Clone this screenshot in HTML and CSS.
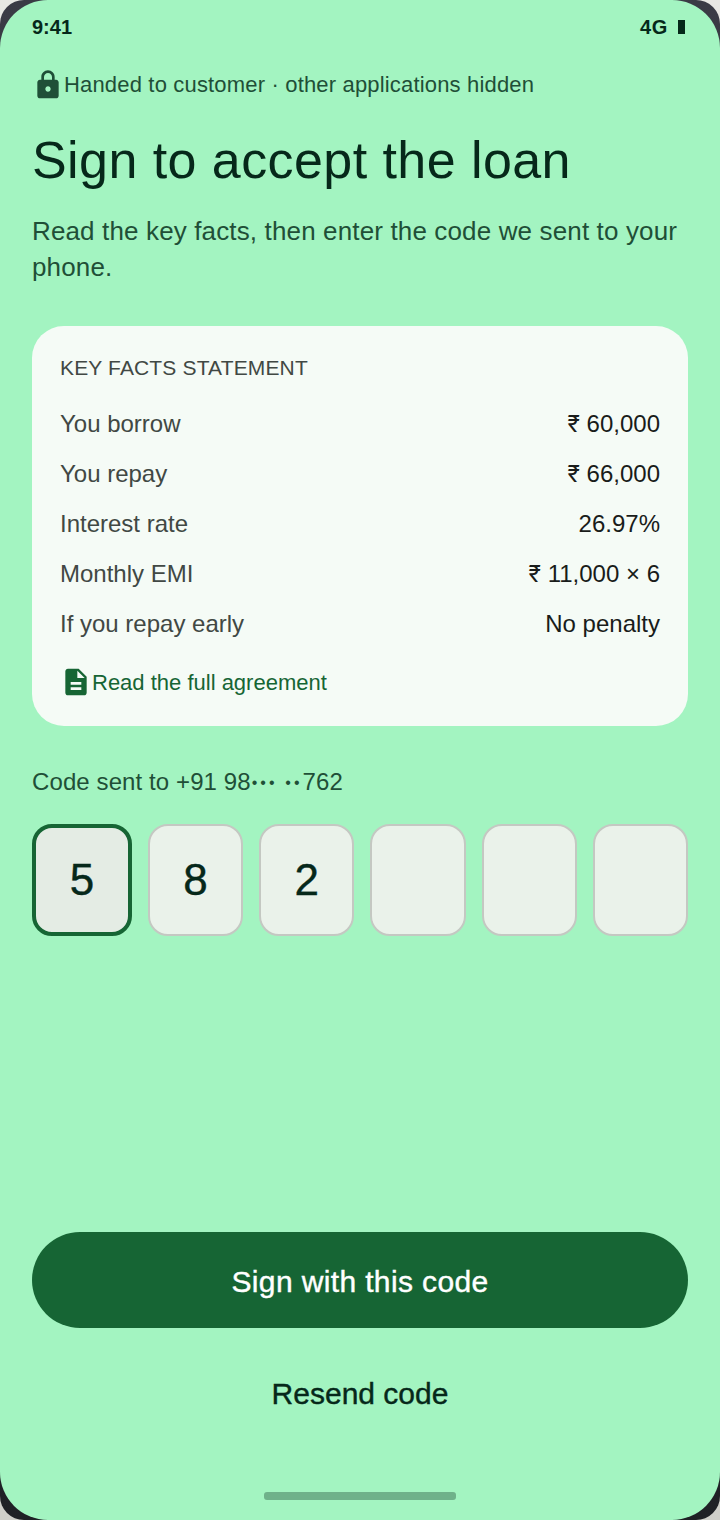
FILE: index.html
```html
<!DOCTYPE html>
<html lang="en">

<head>
    <meta charset="UTF-8">
    <meta name="viewport" content="width=device-width, initial-scale=1.0">
    <title>Sign to accept the loan</title>
    <link rel="stylesheet" href="styles.css">
</head>

<body>
    <div class="phone">
        <div class="screen">
            <div class="status_bar">
                <span>9:41</span>
                <span class="status_right">4G <i class="battery"></i></span>
            </div>

            <div class="handed">
                <svg class="lock_icon" viewBox="0 0 24 24" width="32" height="32">
                    <path fill="#1f4f37" d="M18 8h-1V6c0-2.76-2.24-5-5-5S7 3.24 7 6v2H6c-1.100 0-2 .9-2 2v10c0 1.100.9 2 2 2h12c1.100 0 2-.9 2-2V10c0-1.100-.9-2-2-2zm-6 9c-1.100 0-2-.9-2-2s.9-2 2-2 2 .9 2 2-.9 2-2 2zM9 8V6c0-1.660 1.340-3 3-3s3 1.340 3 3v2H9z"/>
                </svg>
                <span>Handed to customer · other applications hidden</span>
            </div>

            <h1 class="page_title">Sign to accept the loan</h1>
            <p class="page_desc">Read the key facts, then enter the code we sent to your phone.</p>

            <div class="facts_card">
                <div class="facts_title">KEY FACTS STATEMENT</div>
                <div class="fact_row"><span>You borrow</span><span class="fact_value"><span class="rupee">₹</span> 60,000</span></div>
                <div class="fact_row"><span>You repay</span><span class="fact_value"><span class="rupee">₹</span> 66,000</span></div>
                <div class="fact_row"><span>Interest rate</span><span class="fact_value">26.97%</span></div>
                <div class="fact_row"><span>Monthly EMI</span><span class="fact_value"><span class="rupee">₹</span> 11,000 × 6</span></div>
                <div class="fact_row"><span>If you repay early</span><span class="fact_value">No penalty</span></div>
                <a class="full_link" href="#">
                    <svg class="doc_icon" viewBox="0 0 24 24" width="32" height="32">
                        <path fill="#166534" d="M14 2H6c-1.100 0-2 .9-2 2v16c0 1.100.9 2 2 2h12c1.100 0 2-.9 2-2V8l-6-6zm2 16H8v-2h8v2zm0-4H8v-2h8v2zm-3-5V3.500L18.500 9H13z"/>
                    </svg>
                    <span>Read the full agreement</span>
                </a>
            </div>

            <p class="code_label">Code sent to +91 98<span class="mask">•••</span> <span class="mask">••</span>762</p>
            <div class="code_boxes">
                <div class="code_box active">5</div>
                <div class="code_box">8</div>
                <div class="code_box">2</div>
                <div class="code_box"></div>
                <div class="code_box"></div>
                <div class="code_box"></div>
            </div>

            <div class="bottom_actions">
                <a class="sign_btn" href="#">Sign with this code</a>
                <a class="resend_btn" href="#">Resend code</a>
            </div>
            <div class="home_bar"></div>
        </div>
    </div>
</body>

</html>
```

FILE: styles.css
```css
* {
    margin: 0;
    padding: 0;
    box-sizing: border-box;
}

html,
body {
    width: 720px;
    height: 1520px;
    overflow: hidden;
}

body {
    font-family: "Liberation Sans", Arial, sans-serif;
    background: linear-gradient(#e8e8e4, #cfcfca);
}

a {
    text-decoration: none;
}

.phone {
    height: 1520px;
    background: linear-gradient(#3a3b45, #1f2126);
    border-radius: 24px;
    overflow: hidden;
}

.screen {
    display: flex;
    flex-direction: column;
    height: 1520px;
    padding: 0 32px 20px;
    background: #a3f4c1;
    border-radius: 48px;
    color: #06281a;
}

.status_bar {
    display: flex;
    justify-content: space-between;
    align-items: center;
    height: 54px;
    font-size: 20px;
    font-weight: 700;
}

.status_right {
    display: flex;
    align-items: center;
    gap: 10px;
    margin-right: 3px;
    letter-spacing: 0.6px;
}

.battery {
    width: 7px;
    height: 14px;
    background: #06281a;
}

.handed {
    display: flex;
    align-items: center;
    height: 32px;
    margin-top: 15px;
    font-size: 22px;
    letter-spacing: 0.17px;
    color: #1f4f37;
}

.page_title {
    margin-top: 27px;
    font-size: 52px;
    font-weight: 400;
    line-height: 64px;
    letter-spacing: 0.43px;
    color: #06281a;
}

.page_desc {
    margin-top: 21px;
    font-size: 26px;
    line-height: 36px;
    letter-spacing: 0.14px;
    color: #1f4f37;
}

.facts_card {
    height: 400px;
    margin-top: 41px;
    padding: 28px 28px 0;
    background: #f5fbf6;
    border-radius: 32px;
    color: #414844;
}

.facts_title {
    margin-bottom: 17px;
    font-size: 21px;
    line-height: 28px;
    letter-spacing: 0.15px;
}

.fact_row {
    display: flex;
    justify-content: space-between;
    height: 50px;
    font-size: 24px;
    line-height: 50px;
}

.fact_value {
    color: #191c1a;
}

.rupee {
    font-family: Inter, sans-serif;
    font-size: 23px;
}

.full_link {
    display: flex;
    align-items: center;
    margin-top: 17px;
    font-size: 22px;
    color: #166534;
}

.doc_icon {
    margin-bottom: 2px;
}

.code_label {
    margin-top: 40px;
    font-size: 24px;
    line-height: 32px;
    letter-spacing: 0.1px;
    color: #1f4f37;
}

.mask {
    margin-left: 1px;
    font-size: 16px;
    letter-spacing: 3px;
    vertical-align: 2px;
}

.code_boxes {
    display: flex;
    gap: 16px;
    margin-top: 25px;
}

.code_box {
    display: flex;
    flex: 1;
    justify-content: center;
    align-items: center;
    height: 112px;
    background: #eaf2ea;
    border: 2px solid #c4c8c2;
    border-radius: 20px;
    font-size: 44px;
    -webkit-text-stroke: 0.4px #06281a;
    color: #06281a;
}

.code_box.active {
    flex: none;
    width: 100px;
    background: #e4ece4;
    border: 4px solid #166534;
}

.bottom_actions {
    display: flex;
    flex-direction: column;
    margin-top: auto;
}

.sign_btn {
    height: 96px;
    background: #166534;
    border-radius: 48px;
    font-size: 30px;
    line-height: 100px;
    letter-spacing: 0.37px;
    -webkit-text-stroke: 0.4px #ffffff;
    text-align: center;
    color: #ffffff;
}

.resend_btn {
    margin-top: 16px;
    height: 96px;
    font-size: 30px;
    line-height: 100px;
    -webkit-text-stroke: 0.4px #06281a;
    text-align: center;
    color: #06281a;
}

.home_bar {
    align-self: center;
    width: 192px;
    height: 8px;
    margin-top: 52px;
    background: #6fb18a;
    border-radius: 3px;
}
```
